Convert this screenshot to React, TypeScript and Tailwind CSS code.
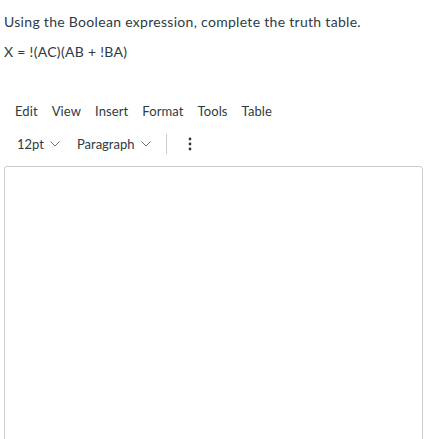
import React from "react";

const Chevron = () => (
  <svg width="10" height="6" viewBox="0 0 10 6" className="ml-[6px]" fill="none">
    <polyline points="0.5,0.5 5,5 9.5,0.5" stroke="#6b7780" strokeWidth="1" />
  </svg>
);

export default function App() {
  const menu = ["Edit", "View", "Insert", "Format", "Tools", "Table"];
  return (
    <div className="font-['Lato',sans-serif] text-[#2d3b45] px-[4px] bg-white h-[439px] overflow-hidden">
      <p className="text-[14px] leading-[21px] pt-[11px] tracking-[0.3px]">Using the Boolean expression, complete the truth table.</p>
      <p className="text-[14px] leading-[21px] mt-[9px] tracking-[0.3px]">X = !(AC)(AB + !BA)</p>
      <div className="flex text-[13px] leading-[20px] mt-[39px] pl-[11px] gap-[14px] tracking-[0.1px]">
        {menu.map((m) => (
          <span key={m}>{m}</span>
        ))}
      </div>
      <div className="flex items-center text-[13px] leading-[20px] mt-[13px] pl-[13px] h-[20px]">
        <span className="flex items-center">12pt<Chevron /></span>
        <span className="flex items-center ml-[17px]">Paragraph<Chevron /></span>
        <span className="w-px h-[20px] bg-[#c7cdd1] ml-[15px]" />
        <svg width="4" height="14" viewBox="0 0 4 14" className="ml-[21px]">
          <circle cx="2" cy="2" r="1.4" fill="#2d3b45" />
          <circle cx="2" cy="7" r="1.4" fill="#2d3b45" />
          <circle cx="2" cy="12" r="1.4" fill="#2d3b45" />
        </svg>
      </div>
      <div className="mt-[12px] w-[419px] h-[300px] border border-[#c7cdd1] rounded-t-[3px]" />
    </div>
  );
}
